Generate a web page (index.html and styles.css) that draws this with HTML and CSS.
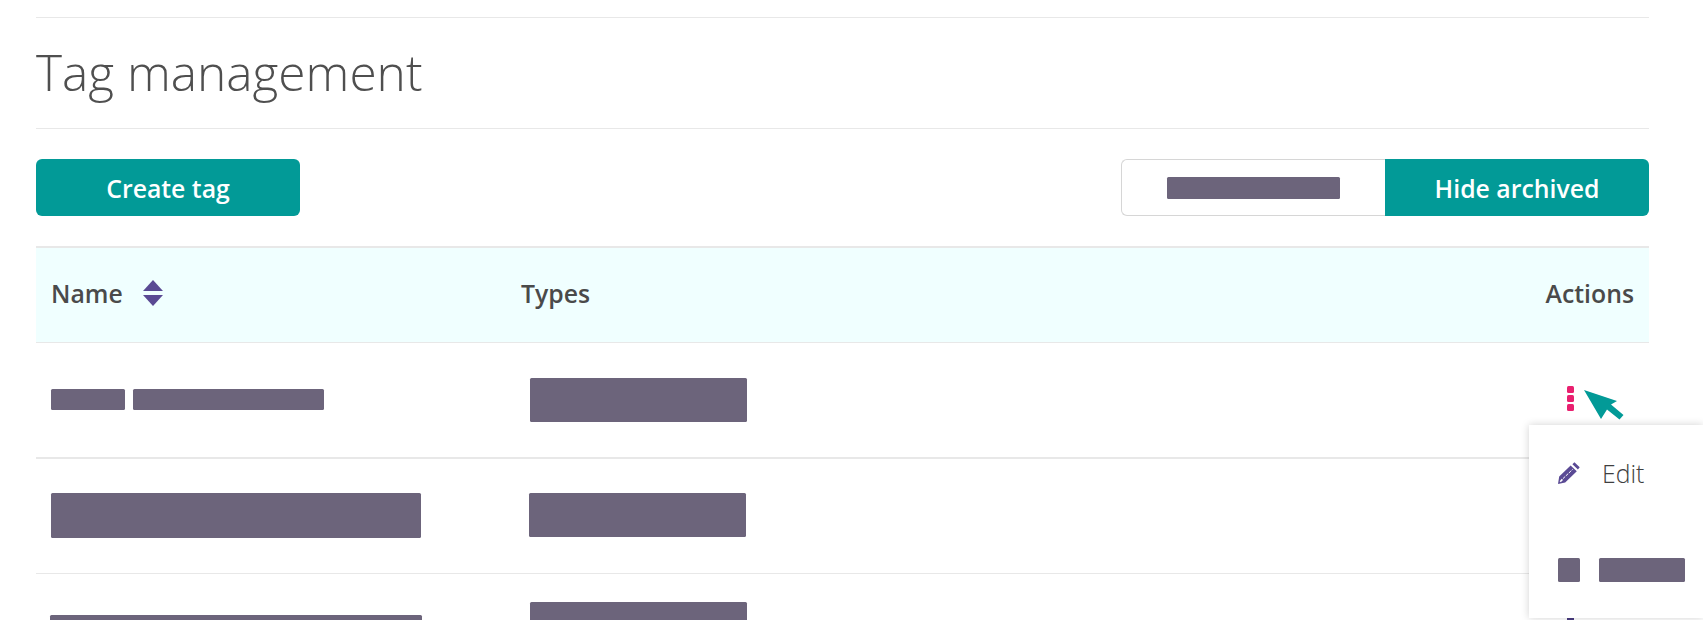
FILE: index.html
```html
<!DOCTYPE html>
<html lang="en">
<head>
  <meta charset="UTF-8">
  <title>Tag management</title>
  <link rel="stylesheet" href="styles.css">
</head>
<body>
  <div class="page">
    <div class="title-bar"><h1>Tag management</h1></div>

    <div class="toolbar">
      <button class="btn btn-primary btn-create">Create tag</button>
      <div class="toggle">
        <button class="btn btn-off"><span class="redact redact-toggle"></span></button>
        <button class="btn btn-primary btn-on">Hide archived</button>
      </div>
    </div>

    <div class="table">
      <div class="row head">
        <div class="col-name">
          Name
          <svg class="sort" width="20" height="26" viewBox="0 0 20 26">
            <path d="M10 0 L20 11 L0 11 Z" fill="#5a4a94"/>
            <path d="M0 15 L20 15 L10 26 Z" fill="#5a4a94"/>
          </svg>
        </div>
        <div class="col-types">Types</div>
        <div class="col-actions">Actions</div>
      </div>

      <div class="row row-one">
        <div class="col-name names">
          <span class="redact r-short"></span>
          <span class="redact r-mid"></span>
        </div>
        <div class="col-types"><span class="redact r-type"></span></div>
        <div class="col-actions">
          <div class="kebab"><i></i><i></i><i></i></div>
        </div>
      </div>

      <div class="row row-two">
        <div class="col-name"><span class="redact r-long"></span></div>
        <div class="col-types"><span class="redact r-type shift"></span></div>
        <div class="col-actions"></div>
      </div>

      <div class="row row-three">
        <div class="col-name"><span class="redact r-long low"></span></div>
        <div class="col-types"><span class="redact r-type"></span></div>
        <div class="col-actions"></div>
      </div>
    </div>
  </div>

  <!-- annotation arrow -->
  <svg class="arrow" width="40" height="30" viewBox="0 0 40 30">
    <path d="M0 0 L33 11 L27 14.5 L39.5 25 L35.5 29.5 L23 19.5 L17 29 Z" fill="#029a97"/>
  </svg>

  <div class="peek"></div>

  <div class="menu">
    <div class="menu-item">
      <svg class="pencil" width="22" height="22" viewBox="0 0 22 22">
        <path d="M16.4 0.3 L21.7 5.3 L19.9 7.6 L14.4 2.3 Z M12.6 3.4 L18.8 9.3 L7.2 20.4 L0 22 L1.2 14.6 Z" fill="#5a4a94"/>
        <path d="M5 16.6 L14.6 7.4" stroke="#fff" stroke-width="1" stroke-dasharray="3 1" fill="none"/>
        <path d="M2.2 19.8 L4.4 17.4" stroke="#fff" stroke-width="1.6" fill="none"/>
      </svg>
      <span>Edit</span>
    </div>
    <div class="menu-item">
      <span class="redact m-icon"></span>
      <span class="redact m-text"></span>
    </div>
  </div>
</body>
</html>
```

FILE: styles.css
```css
* {
  margin: 0;
  padding: 0;
  box-sizing: border-box;
}

html, body {
  height: 620px;
  overflow: hidden;
}

body {
  font-family: "Open Sans", sans-serif;
  color: #4a4a4a;
  background-color: #fff;
  position: relative;
}

.page {
  width: 1613px;
  margin-left: 36px;
  padding-top: 17px;
}

.title-bar {
  border-top: 1px solid #e8e8e8;
  border-bottom: 1px solid #e8e8e8;
  height: 112px;
  display: flex;
  align-items: center;
}

h1 {
  font-size: 49.6px;
  font-weight: 300;
  color: #4f4f4f;
  margin-top: -3px;
}

.toolbar {
  display: flex;
  justify-content: space-between;
  margin-top: 30px;
  height: 57px;
}

.btn {
  font-family: "Open Sans", sans-serif;
  font-size: 24.8px;
  font-weight: 600;
  border: none;
  height: 57px;
}

.btn-primary {
  background-color: #029a97;
  color: #fff;
}

.btn-create {
  width: 264px;
  border-radius: 6px;
}

.toggle {
  display: flex;
}

.btn-off {
  width: 264px;
  background-color: #fff;
  border: 1px solid #d6d6d6;
  border-right: none;
  border-radius: 6px 0 0 6px;
  display: flex;
  align-items: center;
  justify-content: center;
}

.btn-on {
  width: 264px;
  border-radius: 0 6px 6px 0;
}

.redact {
  display: block;
  background-color: #6c647b;
  border-radius: 1.5px;
}

.redact-toggle {
  width: 173px;
  height: 22px;
}

.table {
  margin-top: 30px;
  border-top: 2px solid #e8e8e8;
}

.row {
  display: flex;
  align-items: center;
  border-bottom: 1px solid #e8e8e8;
}

.head {
  height: 95px;
  padding-bottom: 4px;
  background-color: #f0ffff;
  font-size: 24.8px;
  font-weight: 600;
}

.row-one {
  height: 116px;
  border-bottom-width: 2px;
}

.row-two {
  height: 115px;
}

.row-three {
  height: 60px;
  border-bottom: none;
  align-items: flex-start;
}

.col-name {
  width: 485px;
  padding-left: 15px;
  display: flex;
  align-items: center;
}

.col-types {
  flex: 1;
}

.col-actions {
  width: 200px;
  padding-right: 15px;
  display: flex;
  justify-content: flex-end;
}

.sort {
  margin-left: 20px;
}

.names {
  gap: 8px;
  margin-top: -2px;
}

.r-short {
  width: 74px;
  height: 21px;
}

.r-mid {
  width: 191px;
  height: 21px;
}

.r-type {
  width: 217px;
  height: 44px;
  margin-left: 9px;
}

.r-type.shift {
  margin-left: 8px;
  margin-top: -2px;
}

.r-long {
  width: 370px;
  height: 45px;
  margin-top: -2px;
}

.row-three .col-types {
  padding-top: 28px;
}

.row-three .col-name {
  padding-top: 41px;
}

.r-long.low {
  width: 372px;
  margin-left: -1px;
  margin-top: 0;
}

.kebab {
  display: flex;
  flex-direction: column;
  gap: 2.3px;
  margin-right: 60px;
  margin-top: -3px;
}

.kebab i {
  display: block;
  width: 7px;
  height: 7px;
  border-radius: 1.5px;
  background-color: #e9206f;
}

.arrow {
  position: absolute;
  left: 1584px;
  top: 390px;
}

.peek {
  position: absolute;
  left: 1567px;
  top: 612px;
  width: 7px;
  height: 8px;
  background-color: #4a3c80;
}

.menu {
  position: absolute;
  left: 1529px;
  top: 425px;
  width: 174px;
  height: 193px;
  background-color: #fff;
  box-shadow: 0 0 8px rgba(0, 0, 0, 0.18);
  padding: 0 18px 0 29px;
}

.menu-item {
  display: flex;
  align-items: center;
  height: 96px;
  font-size: 24.8px;
  font-weight: 300;
  color: #3f3f3f;
}

.menu-item:first-child span {
  margin-left: 22px;
}

.pencil {
  flex-shrink: 0;
}

.m-icon {
  width: 22px;
  height: 24px;
  margin-top: 2px;
}

.m-text {
  width: 86px;
  height: 24px;
  margin-left: 19px;
  margin-top: 2px;
}
```
